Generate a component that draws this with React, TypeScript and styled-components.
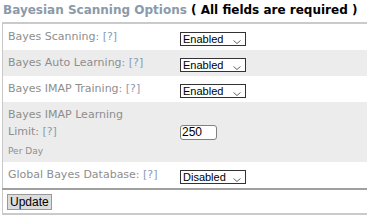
import React from "react";
import styled, { createGlobalStyle } from "styled-components";

const GlobalStyle = createGlobalStyle`
  body {
    margin: 0;
    background: #fff;
    font-family: "DejaVu Sans", Verdana, sans-serif;
  }
`;

const Wrapper = styled.div`
  padding: 2px 0 0 2px;
  width: 366px;
`;

const Title = styled.div`
  font-size: 12px;
  font-weight: bold;
  color: #8a9aaa;
  height: 20px;
  line-height: 16px;
  padding-left: 1px;
  white-space: nowrap;

  span {
    color: #000;
  }
`;

const Table = styled.table`
  border-collapse: collapse;
  width: 365px;
  border-left: 1px solid #c8c8c8;
  border-top: 2px solid #cacaca;
  border-bottom: 2px solid #cacaca;
`;

const Row = styled.tr<{ $shade?: boolean }>`
  background: ${(p) => (p.$shade ? "#ececec" : "#fff")};
`;

const Label = styled.td`
  font-size: 11px;
  color: #8e8e8e;
  padding: 4px 4px 5px 5px;
  width: 164px;
  vertical-align: top;
  line-height: 17px;
  white-space: nowrap;
`;

const Help = styled.span`
  color: #8a9bb0;
`;

const Note = styled.div`
  font-size: 9px;
  line-height: 11px;
  color: #8e8e8e;
  margin-top: 6px;
`;

const Field = styled.td`
  padding: 1px 0 0 4px;
  vertical-align: middle;
`;

const Select = styled.div`
  display: inline-flex;
  align-items: center;
  justify-content: space-between;
  box-sizing: border-box;
  width: 66px;
  height: 14px;
  border: 1px solid #333;
  background: #fff;
  font-family: "Liberation Sans", Arial, sans-serif;
  font-size: 11px;
  line-height: 12px;
  padding: 0 4px 0 2px;
  color: #000;
`;

const Input = styled.div`
  box-sizing: border-box;
  width: 37px;
  height: 15px;
  border: 1px solid #808080;
  border-radius: 3px;
  font-family: "Liberation Sans", Arial, sans-serif;
  font-size: 12px;
  line-height: 13px;
  padding-left: 1px;
  background: #fff;
`;

const FooterRow = styled.tr`
  border-top: 2px solid #a0a0a0;
`;

const FooterCell = styled.td`
  padding: 4px 0 3px 4px;
`;

const Button = styled.button`
  display: block;
  font-family: "Liberation Sans", Arial, sans-serif;
  font-size: 12px;
  line-height: 13px;
  padding: 0 2px;
  height: 16px;
  background: #dcdcdc;
  border: 1px solid #999;
  color: #000;
`;

const Chevron = () => (
  <svg width="8" height="6" viewBox="0 0 8 6" style={{ marginTop: 5 }}>
    <path d="M0.5 1.5 L4 4.5 L7.5 1.5" fill="none" stroke="#666" strokeWidth="1" />
  </svg>
);

const Dropdown = ({ value }: { value: string }) => (
  <Select>
    <span>{value}</span>
    <Chevron />
  </Select>
);

export default function App() {
  return (
    <Wrapper>
      <GlobalStyle />
      <Title>
        Bayesian Scanning Options <span>( All fields are required )</span>
      </Title>
      <Table>
        <tbody>
          <Row>
            <Label>
              Bayes Scanning: <Help>[?]</Help>
            </Label>
            <Field>
              <Dropdown value="Enabled" />
            </Field>
          </Row>
          <Row $shade>
            <Label>
              Bayes Auto Learning: <Help>[?]</Help>
            </Label>
            <Field>
              <Dropdown value="Enabled" />
            </Field>
          </Row>
          <Row>
            <Label>
              Bayes IMAP Training: <Help>[?]</Help>
            </Label>
            <Field>
              <Dropdown value="Enabled" />
            </Field>
          </Row>
          <Row $shade>
            <Label>
              Bayes IMAP Learning
              <br />
              Limit: <Help>[?]</Help>
              <Note>Per Day</Note>
            </Label>
            <Field>
              <Input>250</Input>
            </Field>
          </Row>
          <Row>
            <Label>
              Global Bayes Database: <Help>[?]</Help>
            </Label>
            <Field>
              <Dropdown value="Disabled" />
            </Field>
          </Row>
          <FooterRow>
            <FooterCell colSpan={2}>
              <Button>Update</Button>
            </FooterCell>
          </FooterRow>
        </tbody>
      </Table>
    </Wrapper>
  );
}
